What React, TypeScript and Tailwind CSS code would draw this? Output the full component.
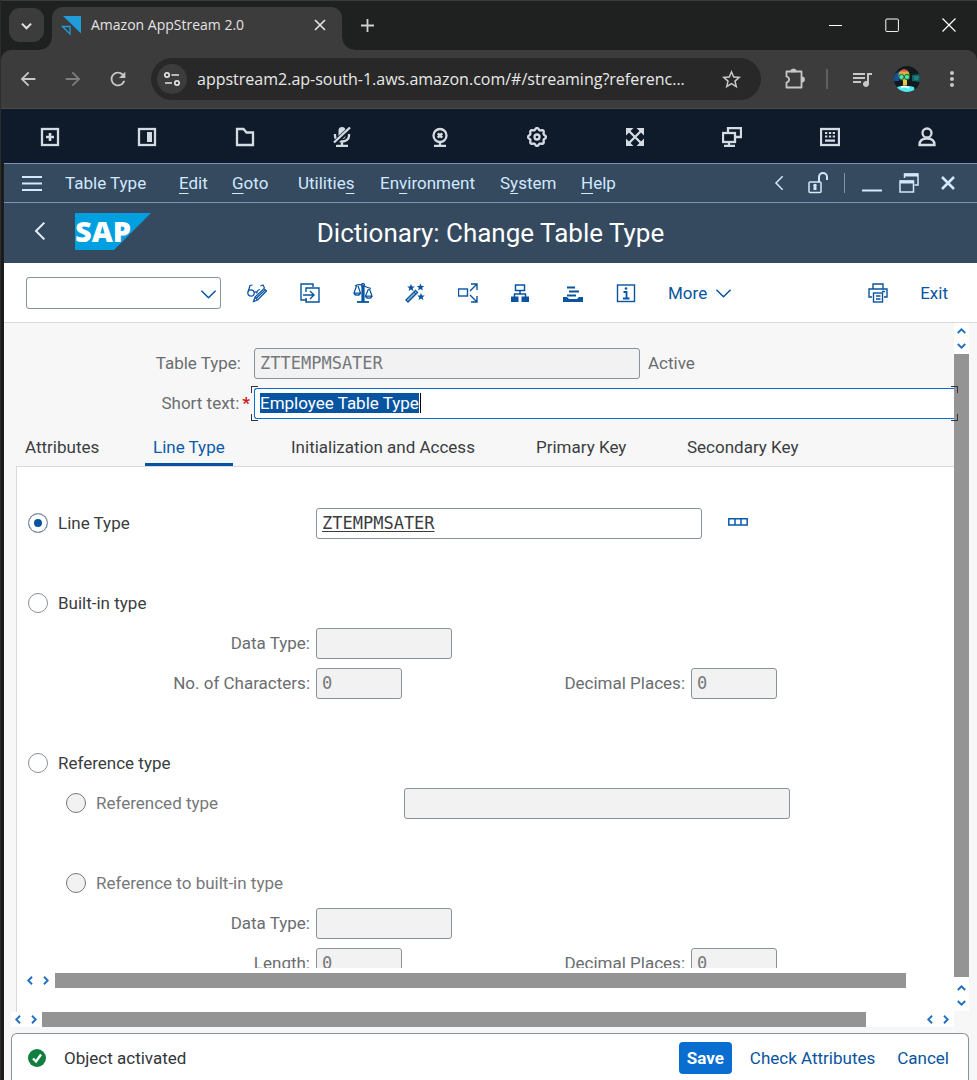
import { useEffect, useRef, type ReactNode } from "react";
import { MdArrowBack, MdArrowForward, MdMoreVert, MdQueueMusic, MdRefresh, MdStarBorder } from "react-icons/md";

/* ---------- icon helpers ---------- */

function Glyph({ children, size = "size-5" }: { children: ReactNode; size?: string }) {
  return (
    <svg viewBox="0 0 20 20" className={`${size} shrink-0`} fill="none" stroke="currentColor" strokeWidth="1.250" aria-hidden="true">
      {children}
    </svg>
  );
}

function Chevron({ d, className }: { d: "up" | "down" | "left" | "right"; className: string }) {
  const points = {
    up: "1,8 6,3 11,8",
    down: "1,4 6,9 11,4",
    left: "8,1 3,6 8,11",
    right: "4,1 9,6 4,11",
  }[d];
  return (
    <svg viewBox="0 0 12 12" className={className} fill="none" stroke="currentColor" aria-hidden="true">
      <polyline points={points} vectorEffect="non-scaling-stroke" />
    </svg>
  );
}

/* ---------- browser chrome ---------- */

function TabStrip() {
  return (
    <div className="flex h-[50px] items-start border-t border-[#3a3b3b] bg-[#1f2120] text-[#e3e3e3]">
      <button aria-label="Search tabs" className="ml-2 mt-[7px] flex h-[34px] w-[35px] items-center justify-center rounded-[11px] bg-[#3c3c3c]">
        <Chevron d="down" className="size-[11px] stroke-2" />
      </button>
      <div className="relative ml-2 mt-[6px] flex h-[43px] w-[290px] items-center rounded-t-[11px] bg-[#3c3c3c] pb-[7px] pl-[9px] pr-3">
        <span className="absolute -left-3 bottom-0 size-3 bg-[radial-gradient(circle_at_0_0,#1f2120_11px,#3c3c3c_12px)]" />
        <span className="absolute -right-3 bottom-0 size-3 bg-[radial-gradient(circle_at_100%_0,#1f2120_11px,#3c3c3c_12px)]" />
        <svg viewBox="0 0 20 20" className="size-5" aria-hidden="true">
          <path d="M2 1H20V18.500Z" fill="#209cd8" />
          <path d="M1.500 11.500H9V19Z" fill="none" stroke="#209cd8" strokeWidth="1.300" />
        </svg>
        <span className="ml-[10px] flex-1 text-[14px]">Amazon AppStream 2.0</span>
        <button aria-label="Close tab" className="flex size-5 items-center justify-center">
          <svg viewBox="0 0 12 12" className="size-3" stroke="currentColor" strokeWidth="1.700"><path d="M1 1 11 11M11 1 1 11" /></svg>
        </button>
      </div>
      <button aria-label="New tab" className="ml-[18px] mt-[17px] size-[15px]">
        <svg viewBox="0 0 15 15" stroke="#d0d0d0" strokeWidth="1.800"><path d="M7.500 1V14M1 7.500H14" /></svg>
      </button>
      <div className="ml-auto mr-[21px] mt-[17px] flex gap-[43px] text-white">
        <button aria-label="Minimize" className="size-[14px]"><svg viewBox="0 0 14 14" stroke="currentColor"><path d="M1 7.500H14" /></svg></button>
        <button aria-label="Maximize" className="size-[14px]"><svg viewBox="0 0 14 14" fill="none" stroke="currentColor"><rect x=".8" y="1" width="12.600" height="12.600" rx="1" /></svg></button>
        <button aria-label="Close" className="size-[14px]"><svg viewBox="0 0 14 14" stroke="currentColor" strokeWidth="1.200"><path d="M.5.5 13.500 13.500M13.500.5.5 13.500" /></svg></button>
      </div>
    </div>
  );
}

function AddressBar() {
  return (
    <div className="bg-[#1f2120]">
      <div className="flex h-[59px] items-center rounded-t-[10px] border-b border-[#4a4a4a] bg-[#3c3c3c] pr-[13px] text-[#c7c7c7]">
        <button aria-label="Back" className="ml-4 size-[22px]"><MdArrowBack className="size-[22px]" /></button>
        <button aria-label="Forward" className="ml-[23px] size-[22px] text-[#7d7d7d]"><MdArrowForward className="size-[22px]" /></button>
        <button aria-label="Reload" className="ml-[23px] size-[22px]"><MdRefresh className="size-[22px]" /></button>
        <div className="ml-[22px] flex h-[42px] min-w-0 flex-1 items-center rounded-full bg-[#282828] pl-[6px] pr-[18px]">
          <button aria-label="Site information" className="flex size-[30px] shrink-0 items-center justify-center rounded-full bg-[#3c3c3c] text-[#e3e3e3]">
            <svg viewBox="0 0 16 16" className="size-4" fill="none" stroke="currentColor" strokeWidth="1.700">
              <circle cx="3" cy="4" r="2.200" /><path d="M7.500 4H15M1 12H8" /><circle cx="13" cy="12" r="2.200" />
            </svg>
          </button>
          <input
            aria-label="Address"
            readOnly
            value="appstream2.ap-south-1.aws.amazon.com/#/streaming?referenc..."
            className="ml-[10px] min-w-0 flex-1 bg-transparent text-[16px] text-[#e8e8e8] outline-none"
          />
          <button aria-label="Bookmark" className="ml-2 size-[23px]"><MdStarBorder className="size-[23px]" /></button>
        </div>
        <button aria-label="Extensions" className="ml-[21px] size-6">
          <svg viewBox="0 0 24 24" fill="none" stroke="currentColor" strokeWidth="1.800" strokeLinejoin="round">
            <path d="M4.500 4.500H19.500V20.500H4.500V15.500C8 14.500 8 10.500 4.500 9.500Z" />
            <path d="M9 4.300A2.600 2.600 0 0 1 14 4.300Z" fill="currentColor" />
            <path d="M20 10.500A2 2 0 0 1 20 14.500Z" fill="currentColor" />
          </svg>
        </button>
        <span className="ml-5 h-5 w-[2px] bg-[#606060]" />
        <button aria-label="Media controls" className="ml-[22px] size-6"><MdQueueMusic className="size-6" /></button>
        <button aria-label="Profile" className="ml-5 size-[26px]">
          <svg viewBox="0 0 26 26">
            <clipPath id="avatar"><circle cx="13" cy="13" r="13" /></clipPath>
            <g clipPath="url(#avatar)">
              <rect width="26" height="26" fill="#101a1c" />
              <path d="M0 9 5 5V15H0Z" fill="#1750a0" />
              <path d="M18 9 26 8V16L18 15Z" fill="#155f62" />
              <path d="M20 11h5M20 13h4" stroke="#24a79c" />
              <circle cx="10" cy="9" r="5.500" fill="#d9b13b" />
              <path d="M6 5.500Q10 1 14.500 5.500Z" fill="#df4d58" />
              <rect x="9" y="14" width="4" height="5" fill="#e5c742" />
              <circle cx="7.500" cy="11" r="2.600" fill="#54e39c" stroke="#15644a" />
              <circle cx="13" cy="11" r="2.600" fill="#54e39c" stroke="#15644a" />
              <path d="M3 21Q11 18.500 20 21L21 26H3Z" fill="#55e8ee" />
              <path d="M7 21.500Q11 19.500 15 22" stroke="#f5ffff" strokeWidth="2" fill="none" />
            </g>
          </svg>
        </button>
        <button aria-label="Menu" className="ml-5 size-6"><MdMoreVert className="size-6" /></button>
      </div>
    </div>
  );
}

/* ---------- streaming toolbar ---------- */

const gearPath = Array.from({ length: 64 }, (_, i) => {
  const a = (i / 64) * Math.PI * 2;
  const r = 8.1 + 0.9 * Math.cos(a * 8);
  return `${i ? "L" : "M"}${(10 + r * Math.sin(a)).toFixed(2)} ${(10 - r * Math.cos(a)).toFixed(2)}`;
}).join("") + "Z";

const streamItems: [string, ReactNode][] = [
  ["Launch app", <><rect x="2" y="2" width="16" height="16" /><path d="M10 6V14M6 10H14" strokeWidth="2.600" /></>],
  ["Switch windows", <><rect x="2" y="2" width="16" height="16" /><path d="M10 5H15V15H10Z" fill="currentColor" stroke="none" /></>],
  ["My files", <path d="M2 2H8.500L11.500 5.500H18V18H2Z" />],
  ["Microphone off", <>
    <rect x="6.500" y="0" width="7" height="12" rx="3.500" fill="currentColor" stroke="none" />
    <path d="M3 7V9A7 5.500 0 0 0 17 9V7M10 14V18M4 19H16" />
    <path d="M2 16.500 18 1.500" stroke="#0f1b2a" strokeWidth="5" /><path d="M2 15.500 18 .5" />
  </>],
  ["Webcam off", <>
    <circle cx="10" cy="8.500" r="6.500" /><path d="M7.800 6.300 12.200 10.700M12.200 6.300 7.800 10.700" strokeWidth="2.600" />
    <path d="M10 15V18M4 19H16" />
  </>],
  ["Settings", <><path d={gearPath} /><circle cx="10" cy="10" r="2.500" /></>],
  ["Fullscreen", <>
    <path d="M4 4 16 16M16 4 4 16" />
    <path d="M1 1H8.500L1 8.500ZM19 1V8.500L11.500 1ZM1 19V11.500L8.500 19ZM19 19H11.500L19 11.500Z" fill="currentColor" stroke="none" />
  </>],
  ["Dual monitor", <><rect x="1" y="6" width="12" height="9" /><path d="M6 6V1H19V10H13M7 15V19M2 19H13" /></>],
  ["Keyboard", <>
    <rect x="1" y="2" width="18" height="16" />
    <path
      d="M5 5h2.300v2H5ZM8.900 5h2.300v2H8.900ZM12.700 5H15v2h-2.300ZM5 8.500h2.300v2H5ZM8.900 8.500h2.300v2H8.900ZM12.700 8.500H15v2h-2.300ZM5 12.500H15v2.300H5Z"
      fill="currentColor"
      stroke="none"
    />
  </>],
  ["Profile", <><circle cx="10" cy="6" r="4.500" /><path d="M2.500 18Q2.500 11.500 10 11.500T17.500 18Z" /></>],
];

function StreamBar() {
  return (
    <nav className="mr-px grid h-[54px] grid-cols-10 items-center bg-[#0f1b2a] pt-[2px] text-[#d5dbe3]">
      {streamItems.map(([label, icon]) => (
        <button key={label} aria-label={label} className="flex h-full items-center justify-center">
          <svg viewBox="0 0 20 20" className="size-5" fill="none" stroke="currentColor" strokeWidth="2.300" aria-hidden="true">{icon}</svg>
        </button>
      ))}
    </nav>
  );
}

/* ---------- SAP shell ---------- */

function MenuBar() {
  const u = "underline underline-offset-4";
  return (
    <div className="flex h-[39px] items-center border-t border-[#7897b8] bg-[#354a5f] pr-5 text-[#d1e8ff]">
      <button aria-label="Main menu" className="ml-[18px] mr-[23px] size-5">
        <Glyph><path d="M0 4H20M0 10.500H20M0 17H20" strokeWidth="2" /></Glyph>
      </button>
      <nav className="grid flex-1 grid-cols-[114px_53px_66px_82px_120px_81px_auto] text-left [&>button]:text-left">
        <button>Table Type</button>
        <button><span className={u}>E</span>dit</button>
        <button><span className={u}>G</span>oto</button>
        <button>Utilitie<span className={u}>s</span></button>
        <button>En<span className={u}>v</span>ironment</button>
        <button>S<span className={u}>y</span>stem</button>
        <button><span className={u}>H</span>elp</button>
      </nav>
      <button aria-label="Collapse" className="size-4"><Chevron d="left" className="size-4 stroke-[1.500]" /></button>
      <button aria-label="Unlocked" className="ml-[19px] size-[22px]">
        <svg viewBox="0 0 22 22" fill="none" stroke="currentColor" strokeWidth="1.500">
          <rect x="2" y="10" width="12" height="10.500" rx="1" />
          <path d="M12 10V5A4 4 0 0 1 20 5V8" strokeWidth="2" />
          <circle cx="8" cy="13.500" r="1.800" fill="currentColor" stroke="none" />
          <path d="M6.500 18H9.500V15H6.500Z" fill="currentColor" stroke="none" />
        </svg>
      </button>
      <span className="ml-[15px] h-5 w-px bg-[#8093a6]" />
      <button aria-label="Minimize window" className="ml-[17px] size-5"><Glyph><path d="M0 17.500H20" strokeWidth="2" /></Glyph></button>
      <button aria-label="Restore window" className="ml-[17px] size-5">
        <Glyph><path d="M5.500 5V1H19V12H15.500" strokeWidth="1.500" /><path d="M5.500 2H19" strokeWidth="3" /><rect x="1" y="8" width="13.500" height="11" strokeWidth="1.500" /><path d="M1 9H14.500" strokeWidth="3" /></Glyph>
      </button>
      <button aria-label="Close window" className="ml-5 size-[18px]">
        <svg viewBox="0 0 18 18" stroke="currentColor" strokeWidth="2.600"><path d="M3 3 15 15M15 3 3 15" /></svg>
      </button>
    </div>
  );
}

function TitleBar() {
  return (
    <header className="grid h-[61px] grid-cols-[1fr_auto_1fr] items-center border-t border-[#7897b8] bg-[#354a5f]">
      <div className="flex items-center pb-1">
        <button aria-label="Back" className="ml-[27px] size-5 text-[#e6f0fa]"><Chevron d="left" className="size-5 stroke-2" /></button>
        <svg viewBox="0 0 76 37" className="ml-6 h-[37px] w-[76px]" role="img" aria-label="SAP">
          <path d="M0 0H76L39 37H0Z" fill="#009fe0" />
          <text x="0" y="29" fontFamily="Open Sans, sans-serif" fontWeight="800" fontSize="29" fill="#fff">SAP</text>
        </svg>
      </div>
      <h1 className="text-[26px] leading-8 text-white">Dictionary: Change Table Type</h1>
    </header>
  );
}

const star = (x: number, y: number) =>
  `M${x} ${y - 3.6}l1.100 2.500 2.700.2-2.100 1.700.7 2.600-2.400-1.400-2.400 1.400.7-2.600-2.100-1.700 2.700-.2Z`;

const toolItems: [string, ReactNode][] = [
  ["Display / Change", <>
    <circle cx="4" cy="10" r="3.200" /><path d="M1.200 8.500 3 2.500 5.500 2M7 9.500Q8.500 8 10 9.500M10 10.500A3.200 3.200 0 0 1 13 6.500M17.500 5 16 2 13.500 3" />
    <path d="M6.500 18.500 8 14 17 5.500 19.500 8 10.500 17ZM8 14 10.500 17M9 15.500 18 7" />
  </>],
  ["Other object", <><path d="M7 17H1V1H13V4" strokeWidth="1.400" /><path d="M6 9V5H19V19H6V15M3 12H14M10 8 14 12 10 16" strokeWidth="1.400" /></>],
  ["Check", <>
    <path d="M4 19H16" strokeWidth="1.800" /><path d="M10 3V19" strokeWidth="3.200" /><path d="M2 3Q6 .5 10 2.500T18 5.500" />
    <circle cx="10" cy="2" r="1.500" />
    <path d="M3.500 3 1 10H7.500L5 3M1 10A3.300 2.500 0 0 0 7.500 10M15.500 6 12.500 13H19L16.500 6M12.500 13A3.300 2.500 0 0 0 19 13" />
  </>],
  ["Activate", <>
    <path d="M1 17 10.500 7.500 12.500 9.500 3 19ZM9 9 11 11" strokeWidth="1.400" /><path d="M2 17 9 10 10.500 11.500 3.500 18.500Z" fill="currentColor" fillOpacity=".5" stroke="none" />
    <path d={star(6, 4.5) + star(15.5, 4) + star(16, 13.5)} fill="currentColor" stroke="none" />
  </>],
  ["Where-used", <><rect x="0.500" y="6" width="9" height="7" strokeWidth="1.400" /><path d="M12 8 19 1M13 1H19V7M12 12 19 19M13 19H19V13" strokeWidth="1.400" /></>],
  ["Hierarchy", <>
    <rect x="5.500" y="2" width="9" height="5.500" strokeWidth="1.500" /><path d="M10 7.500V11M4.500 14V11H15.500V14" strokeWidth="1.500" />
    <path d="M1 13.500H8.500V19H1ZM11.500 13.500H19V19H11.500Z" fill="currentColor" stroke="none" />
  </>],
  ["Sort", <>
    <path d="M4 4.500H12M6 8.500H16M4 12.500H13" strokeWidth="2" /><path d="M0 14H4L6 16H14L16 14H20V19H0Z" fill="currentColor" stroke="none" />
  </>],
  ["Information", <>
    <rect x="1.500" y="2" width="17" height="16.500" strokeWidth="1.400" /><path d="M7.500 9H10.500V15M7 15.500H13.500" strokeWidth="1.800" /><circle cx="10" cy="5.500" r="1.300" fill="currentColor" stroke="none" />
  </>],
];

function Toolbar() {
  return (
    <div className="flex h-[60px] items-center border-b border-[#d9d9d9] bg-white text-[#0854a0]">
      <div className="relative ml-[22px] h-8 w-[195px]">
        <select aria-label="Command" className="size-full appearance-none rounded-[3px] border border-[#89919a] bg-white"><option value="" /></select>
        <Chevron d="down" className="pointer-events-none absolute right-1 top-2 size-[17px] stroke-[1.500]" />
      </div>
      <div className="ml-[10px] grid w-[421px] grid-cols-8">
        {toolItems.map(([label, icon]) => (
          <button key={label} aria-label={label} className="flex h-8 items-center justify-center"><Glyph>{icon}</Glyph></button>
        ))}
      </div>
      <button className="ml-4 flex items-center gap-2">More <Chevron d="down" className="size-[17px] stroke-[1.500]" /></button>
      <button aria-label="Print" className="ml-auto size-5">
        <Glyph>
          <path d="M5 6V1H15V6M4 14H1V6H19V14H16" strokeWidth="1.400" /><rect x="5.500" y="10" width="9" height="9" strokeWidth="1.400" /><path d="M8 13H12.500M8 16H12.500M14 8.500H17" strokeWidth="1.300" />
        </Glyph>
      </button>
      <button className="ml-8 mr-[29px]">Exit</button>
    </div>
  );
}

/* ---------- form parts ---------- */

const box = "h-[31px] shrink-0 rounded-[3px] border border-[#89919a] px-[5px] font-['DejaVu_Sans_Mono',monospace] text-[17px] outline-none";

function Disabled({ id, value = "", width }: { id: string; value?: string; width: string }) {
  return <input id={id} readOnly value={value} className={`${box} ${width} bg-[#f2f2f2] text-[#75787b]`} />;
}

function Radio({ id, label, checked, muted }: { id: string; label: string; checked?: boolean; muted?: boolean }) {
  return (
    <div className={`flex items-center gap-[10px] ${muted ? "text-[#75787b]" : "text-[#3a3d40]"}`}>
      <input
        type="radio"
        id={id}
        name={muted ? "reference-kind" : "kind"}
        defaultChecked={checked}
        className={`size-5 appearance-none rounded-full border ${
          muted ? "border-[#75787b] bg-[#f2f2f2]" : "border-[#89919a] bg-white"
        } checked:bg-[#0854a0] checked:shadow-[inset_0_0_0_5px_white]`}
      />
      <label htmlFor={id}>{label}</label>
    </div>
  );
}

function TypeRow({ id, label }: { id: string; label: string }) {
  return (
    <div className="flex h-10 shrink-0 items-center text-[#6a6d70]">
      <label htmlFor={id} className="w-[299px] pr-[6px] text-right">{label}</label>
      <Disabled id={id} width="w-[136px]" />
    </div>
  );
}

function LengthRow({ id, label }: { id: string; label: string }) {
  return (
    <div className="flex h-10 shrink-0 items-center text-[#6a6d70]">
      <label htmlFor={id} className="w-[299px] pr-[6px] text-right">{label}</label>
      <Disabled id={id} value="0" width="w-[86px]" />
      <label htmlFor={`${id}-dec`} className="w-[289px] pr-[6px] text-right">Decimal Places:</label>
      <Disabled id={`${id}-dec`} value="0" width="w-[86px]" />
    </div>
  );
}

function Steppers({ vertical }: { vertical?: boolean }) {
  return (
    <div className={`flex shrink-0 items-center justify-center bg-white text-[#1b6ec2] ${vertical ? "h-[31px] w-full flex-col gap-[5px] pb-px" : "h-full w-[31px] gap-[6px] pr-px"}`}>
      <button aria-label={vertical ? "Scroll up" : "Scroll left"}><Chevron d={vertical ? "up" : "left"} className="size-[9px] stroke-[1.800]" /></button>
      <button aria-label={vertical ? "Scroll down" : "Scroll right"}><Chevron d={vertical ? "down" : "right"} className="size-[9px] stroke-[1.800]" /></button>
    </div>
  );
}

function ShortText() {
  const ref = useRef<HTMLInputElement>(null);
  useEffect(() => {
    ref.current?.focus();
    ref.current?.select();
  }, []);
  return (
    <div className="relative flex h-[31px] flex-1 items-center rounded-l-[3px] border border-r-0 border-[#0a6ed1] bg-white pl-[5px] text-[#32363a]">
      <input
        ref={ref}
        id="short-text"
        defaultValue="Employee Table Type"
        className="field-sizing-content h-5 leading-5 outline-none selection:bg-[#0854a0] selection:text-white"
      />
      <span className="ml-px h-5 w-px bg-black" />
      <span className="absolute -left-1 -top-[3px] size-[7px] border-l border-t border-[#32363a]" />
      <span className="absolute -bottom-[3px] -left-1 size-[7px] border-b border-l border-[#32363a]" />
      <span className="absolute -right-1 -top-[3px] z-10 size-[7px] border-r border-t border-[#32363a]" />
      <span className="absolute -bottom-[3px] -right-1 z-10 size-[7px] border-b border-r border-[#32363a]" />
    </div>
  );
}

function Tabs() {
  const tabs = ["Attributes", "Line Type", "Initialization and Access", "Primary Key", "Secondary Key"];
  return (
    <div role="tablist" className="ml-[13px] grid h-11 shrink-0 grid-cols-[128px_138px_245px_151px_auto] items-stretch justify-start text-[#3a3d40]">
      {tabs.map((t) => (
        <button
          key={t}
          role="tab"
          aria-selected={t === "Line Type"}
          className="w-max border-b-[4px] border-transparent px-2 pt-2 aria-selected:border-[#0854a0] aria-selected:text-[#0a5ba8]"
        >
          {t}
        </button>
      ))}
    </div>
  );
}

function Panel() {
  return (
    <section className="-mt-px ml-3 flex min-h-0 flex-1 flex-col border-l border-t border-[#d9d9d9] bg-white">
      <div className="flex min-h-0 flex-1 flex-col overflow-hidden pt-9">
        <div className="flex h-10 shrink-0 items-center pl-[11px]">
          <div className="w-[288px]"><Radio id="line-type" label="Line Type" checked /></div>
          <input aria-label="Line type name" defaultValue="ZTEMPMSATER" className={`${box} w-[386px] bg-white text-[#3a3d40] underline underline-offset-2`} />
          <button aria-label="Structure" className="ml-[26px] h-3 w-5 text-[#0a5ba8]">
            <svg viewBox="0 0 20 12" fill="none" stroke="currentColor" strokeWidth="1.500"><path d="M.8 1.800H19.200V8H.8ZM7 2V8M13 2V8" /></svg>
          </button>
        </div>
        <div className="mt-10 flex h-10 shrink-0 items-center pl-[11px]"><Radio id="built-in" label="Built-in type" /></div>
        <TypeRow id="data-type" label="Data Type:" />
        <LengthRow id="characters" label="No. of Characters:" />
        <div className="mt-10 flex h-10 shrink-0 items-center pl-[11px]"><Radio id="reference" label="Reference type" /></div>
        <div className="flex h-10 shrink-0 items-center pl-[49px]">
          <div className="w-[338px]"><Radio id="referenced" label="Referenced type" muted /></div>
          <input aria-label="Referenced type name" readOnly className={`${box} w-[386px] bg-[#f2f2f2]`} />
        </div>
        <div className="mt-10 flex h-10 shrink-0 items-center pl-[49px]"><Radio id="ref-built-in" label="Reference to built-in type" muted /></div>
        <TypeRow id="ref-data-type" label="Data Type:" />
        <LengthRow id="ref-length" label="Length:" />
      </div>
      <div className="mb-6 mt-[5px] flex h-[15px] shrink-0 pl-[6px]">
        <Steppers />
        <div className="ml-px mr-12 flex-1 bg-[#949494]" />
      </div>
    </section>
  );
}

export default function App() {
  return (
    <div className="flex h-screen min-h-[640px] flex-col overflow-hidden border-l border-[#2c2c2c] bg-[#1b1b1b] font-['Roboto',sans-serif] text-[17px] leading-6">
      <div className="shrink-0 font-['Open_Sans',sans-serif]">
        <TabStrip />
        <AddressBar />
      </div>
      <div className="shrink-0 bg-[#0f1b2a]"><StreamBar /></div>
      <div className="ml-[3px] flex min-h-0 flex-1 flex-col bg-[#f7f7f7]">
        <MenuBar />
        <TitleBar />
        <Toolbar />
        <main className="flex min-h-0 flex-1">
          <div className="flex min-w-0 flex-1 flex-col">
            <div className="flex shrink-0 flex-col pt-5 text-[#6a6d70]">
              <div className="flex h-10 items-center">
                <label htmlFor="table-type" className="w-[250px] pr-[13px] text-right">Table Type:</label>
                <Disabled id="table-type" value="ZTTEMPMSATER" width="w-[386px]" />
                <span className="ml-2">Active</span>
              </div>
              <div className="flex h-10 items-center">
                <label htmlFor="short-text" className="flex w-[250px] justify-end gap-[3px] pr-1">
                  Short text:<span className="font-bold text-[#cc1919]">*</span>
                </label>
                <ShortText />
              </div>
            </div>
            <Tabs />
            <Panel />
            <div className="ml-[7px] flex h-[15px] shrink-0 bg-white">
              <Steppers />
              <div className="flex-1 bg-[#949494]" />
              <div className="w-[57px]" />
              <Steppers />
            </div>
          </div>
          <div className="mb-4 mr-2 flex w-[15px] shrink-0 flex-col bg-white">
            <Steppers vertical />
            <div className="flex-1 bg-[#949494]" />
            <div className="h-[3px]" />
            <Steppers vertical />
          </div>
        </main>
        <footer className="ml-[7px] mr-2 mt-[6px] flex h-[47px] shrink-0 items-center rounded-t-md border border-b-0 border-[#89919a] bg-white pl-4 pr-[19px] pt-[2px] text-[#0854a0]">
          <svg viewBox="0 0 18 18" className="size-[18px]" aria-hidden="true">
            <circle cx="9" cy="9" r="9" fill="#107e3e" /><path d="M5 9.500 8 12.500 13 5.500" fill="none" stroke="#fff" strokeWidth="2.400" />
          </svg>
          <span role="status" className="ml-[18px] flex-1 text-[#32363a]">Object activated</span>
          <button className="h-8 rounded-[4px] bg-[#0a6ed1] px-2 font-bold text-white">Save</button>
          <button className="ml-[18px]">Check Attributes</button>
          <button className="ml-[22px]">Cancel</button>
        </footer>
      </div>
    </div>
  );
}
